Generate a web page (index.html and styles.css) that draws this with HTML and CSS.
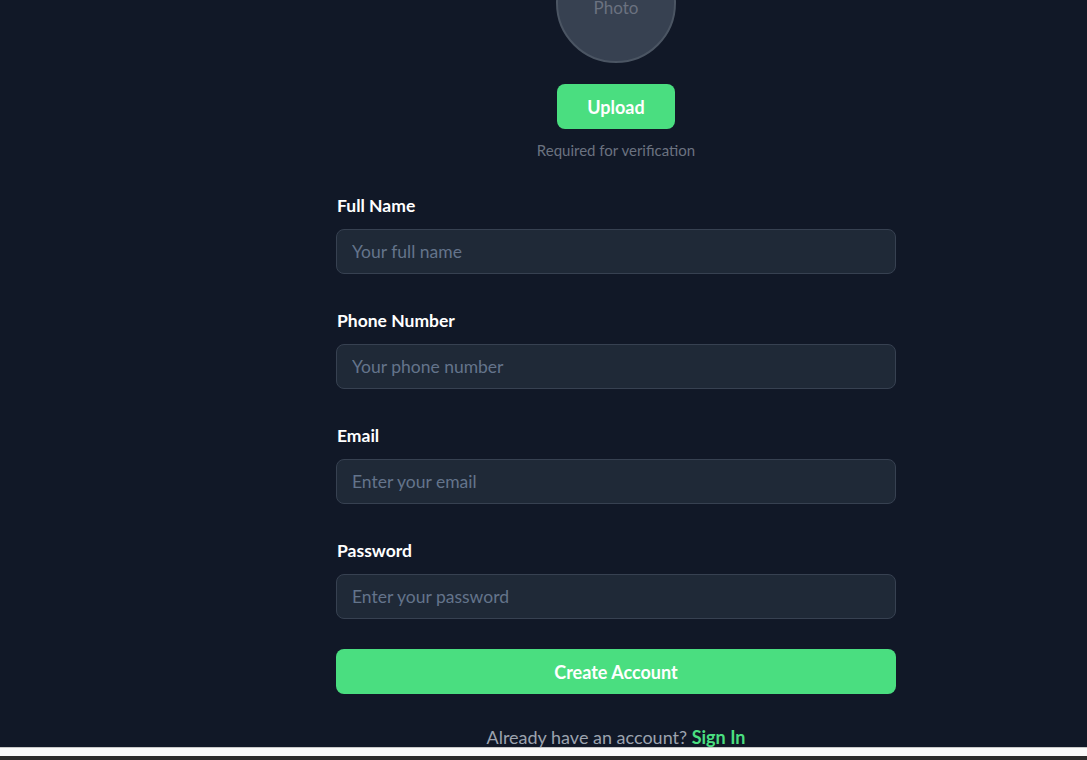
FILE: index.html
```html
<!DOCTYPE html>
<html lang="en">
<head>
<meta charset="utf-8">
<title>Create Account</title>
<link rel="stylesheet" href="styles.css">
</head>
<body>
<main class="page">
  <div class="content">
    <section class="photo-block">
      <div class="avatar"><span class="avatar-text">Photo</span></div>
      <button class="btn upload-btn" type="button">Upload</button>
      <p class="hint">Required for verification</p>
    </section>
    <form class="form">
      <div class="field">
        <label class="label">Full Name</label>
        <input class="input" type="text" placeholder="Your full name">
      </div>
      <div class="field">
        <label class="label">Phone Number</label>
        <input class="input" type="tel" placeholder="Your phone number">
      </div>
      <div class="field">
        <label class="label">Email</label>
        <input class="input" type="email" placeholder="Enter your email">
      </div>
      <div class="field">
        <label class="label">Password</label>
        <input class="input" type="password" placeholder="Enter your password">
      </div>
      <button class="btn submit-btn" type="button">Create Account</button>
      <p class="signin">Already have an account? <a class="signin-link" href="#">Sign In</a></p>
    </form>
  </div>
</main>
<div class="screen-bottom">
  <div class="strip-light"></div>
  <div class="strip-dark"></div>
</div>
</body>
</html>
```
FILE: styles.css
```css
* { box-sizing: border-box; }
html, body {
  margin: 0;
  padding: 0;
  background: #111827;
  height: 100%;
  overflow: hidden;
}
body {
  font-family: "Lato", "Noto Sans", sans-serif;
  color: #ffffff;
}
.page {
  padding-left: 145px;
  display: flex;
  justify-content: center;
}
.content {
  width: 560px;
  margin-top: -57px;
  display: flex;
  flex-direction: column;
}
.photo-block {
  display: flex;
  flex-direction: column;
  align-items: center;
}
.avatar {
  width: 120px;
  height: 120px;
  border-radius: 50%;
  background: #374151;
  border: 2px solid #4b5563;
  display: flex;
  align-items: center;
  justify-content: center;
}
.avatar-text {
  color: #6b7280;
  font-size: 17px;
  margin-top: 8px;
}
.btn {
  font-family: inherit;
  border: none;
  background: #4ade80;
  color: #ffffff;
  font-weight: 700;
  font-size: 18px;
  border-radius: 8px;
  cursor: pointer;
}
.upload-btn {
  margin-top: 21px;
  width: 118px;
  height: 45px;
}
.hint {
  margin: 11px 0 0;
  font-size: 15px;
  line-height: 20px;
  color: #6b7280;
}
.form {
  margin-top: 34px;
  display: flex;
  flex-direction: column;
}
.field {
  display: flex;
  flex-direction: column;
  margin-bottom: 35px;
}
.field:last-of-type { margin-bottom: 30px; }
.label {
  font-size: 17.5px;
  font-weight: 700;
  line-height: 24px;
  margin-bottom: 11px;
  padding-left: 1px;
}
.input {
  height: 45px;
  background: #1f2937;
  border: 1px solid #374151;
  border-radius: 8px;
  padding: 0 15px;
  font-family: inherit;
  font-size: 17.5px;
  color: #ffffff;
  outline: none;
}
.input::placeholder { color: #64748b; }
.submit-btn {
  height: 45px;
  width: 100%;
}
.signin {
  margin: 29px 0 0;
  text-align: center;
  font-size: 18px;
  line-height: 28px;
  color: #9ca3af;
}
.signin-link {
  color: #4ade80;
  font-weight: 700;
  text-decoration: none;
}
.screen-bottom {
  position: fixed;
  left: 0;
  right: 0;
  bottom: 0;
  height: 13px;
  display: flex;
  flex-direction: column;
}
.strip-light {
  height: 9px;
  background: #fafafa;
  border-top: 1px solid #c8c8c8;
}
.strip-dark {
  height: 4px;
  background: #2b2b2b;
}
```
